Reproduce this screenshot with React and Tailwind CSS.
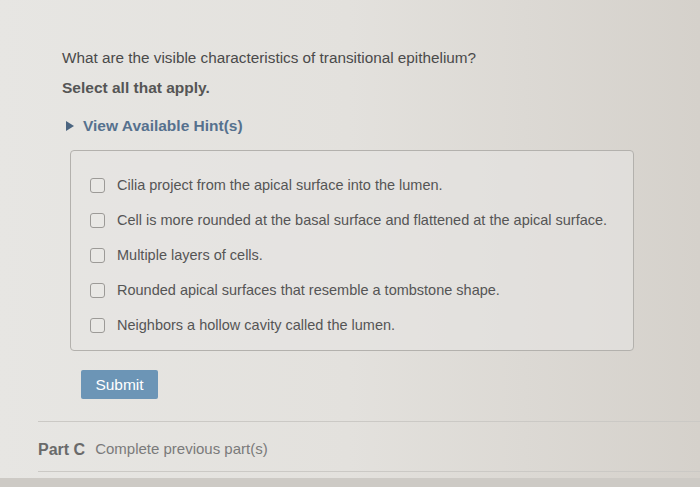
export default function App() {
  const options = [
    "Cilia project from the apical surface into the lumen.",
    "Cell is more rounded at the basal surface and flattened at the apical surface.",
    "Multiple layers of cells.",
    "Rounded apical surfaces that resemble a tombstone shape.",
    "Neighbors a hollow cavity called the lumen.",
  ];
  return (
    <div
      className="relative w-[700px] h-[487px] overflow-hidden bg-linear-to-r from-[#e7e6e3] via-[#e3e1dd] to-[#d5d1cb]"
      style={{ fontFamily: '"Liberation Sans", Arial, sans-serif' }}
    >
      <div className="pl-[38px] pt-[48px]">
        <div className="pl-[24px]">
          <p className="text-[15.3px] leading-[20px] text-[#4a4a4a]">
            What are the visible characteristics of transitional epithelium?
          </p>
          <p className="mt-[10px] text-[15.5px] leading-[20px] font-bold text-[#555]">
            Select all that apply.
          </p>
          <div className="mt-[18px] flex items-center h-[20px]">
            <svg width="10" height="12" viewBox="0 0 10 12" className="ml-[3px]">
              <path d="M1 1 L9 6 L1 11 Z" fill="#4b6580" />
            </svg>
            <span className="ml-[8px] text-[15.5px] font-bold text-[#56718e]">
              View Available Hint(s)
            </span>
          </div>
          <div className="mt-[14px] ml-[8px] w-[564px] border border-[#b3b1ad] rounded-[4px] bg-[#e6e5e2]/60 pt-[17px] pb-[7px]">
            {options.map((o) => (
              <div key={o} className="h-[35px] flex items-center pl-[19px]">
                <span className="w-[15px] h-[15px] rounded-[3px] border-[1.5px] border-[#9c9a97] bg-[#e9e8e5] shrink-0" />
                <span className="ml-[12px] text-[14.5px] text-[#555]">{o}</span>
              </div>
            ))}
          </div>
          <button className="mt-[19px] ml-[19px] w-[77px] h-[29px] rounded-[2px] bg-[#6c95b6] text-white text-[15.5px] flex items-center justify-center">
            Submit
          </button>
        </div>
        <div className="mt-[22px] border-t border-[#cbc9c5] h-[51px] pt-[6px] flex items-center border-b">
          <span className="text-[16px] font-bold text-[#6a6a6a]">Part C</span>
          <span className="ml-[10px] text-[15px] text-[#7a7a7a]">Complete previous part(s)</span>
        </div>
      </div>
      <div className="absolute left-0 right-0 bottom-0 h-[9px] bg-[#cdcac5]" />
    </div>
  );
}
